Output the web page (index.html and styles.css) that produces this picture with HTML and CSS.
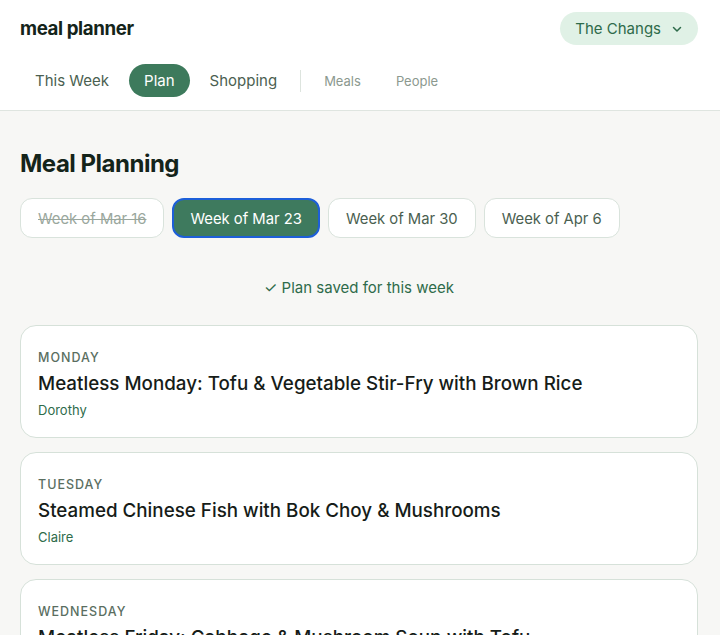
FILE: index.html
```html
<!DOCTYPE html>
<html lang="en">
<head>
<meta charset="utf-8">
<title>meal planner</title>
<link rel="stylesheet" href="styles.css">
</head>
<body>
<header class="header">
  <div class="top-row">
    <div class="brand">meal planner</div>
    <button class="household">The Changs
      <svg class="chev" width="12" height="12" viewBox="0 0 12 12" fill="none"><path d="M2.5 4.5 6 8l3.5-3.5" stroke="currentColor" stroke-width="1.5" stroke-linecap="round" stroke-linejoin="round"/></svg>
    </button>
  </div>
  <nav class="nav">
    <a class="nav-item">This Week</a>
    <a class="nav-item active">Plan</a>
    <a class="nav-item">Shopping</a>
    <span class="nav-divider"></span>
    <a class="nav-item minor">Meals</a>
    <a class="nav-item minor">People</a>
  </nav>
</header>
<main class="main">
  <h1 class="title">Meal Planning</h1>
  <div class="weeks">
    <button class="week past">Week of Mar 16</button>
    <button class="week current">Week of Mar 23</button>
    <button class="week">Week of Mar 30</button>
    <button class="week">Week of Apr 6</button>
  </div>
  <p class="saved">✓ Plan saved for this week</p>
  <div class="days">
    <section class="card">
      <div class="day">MONDAY</div>
      <div class="meal">Meatless Monday: Tofu &amp; Vegetable Stir-Fry with Brown Rice</div>
      <div class="cook">Dorothy</div>
    </section>
    <section class="card">
      <div class="day">TUESDAY</div>
      <div class="meal">Steamed Chinese Fish with Bok Choy &amp; Mushrooms</div>
      <div class="cook">Claire</div>
    </section>
    <section class="card">
      <div class="day">WEDNESDAY</div>
      <div class="meal">Meatless Friday: Cabbage &amp; Mushroom Soup with Tofu</div>
      <div class="cook">Dorothy</div>
    </section>
  </div>
</main>
</body>
</html>
```
FILE: styles.css
```css
* { box-sizing: border-box; }
html, body { margin: 0; padding: 0; }
body {
  font-family: Inter, "Noto Sans", sans-serif;
  background: #f7f7f5;
  color: #1a1f1b;
  overflow: hidden;
}
.header {
  background: #ffffff;
  border-bottom: 1px solid #dfe5e0;
  padding: 12px 22px 13px 20px;
}
.top-row {
  display: flex;
  justify-content: space-between;
  align-items: center;
  height: 33px;
}
.brand {
  font-size: 18.7px;
  font-weight: 700;
  letter-spacing: -0.4px;
  color: #14241a;
}
.household {
  display: flex;
  align-items: center;
  gap: 10px;
  height: 33px;
  padding: 0 15px 0 15px;
  border: none;
  border-radius: 17px;
  background: #e0f1e6;
  color: #2e6b4a;
  font-family: inherit;
  font-size: 15px;
}
.chev { color: #2e6b4a; }
.nav {
  display: flex;
  align-items: center;
  gap: 5px;
  margin-top: 19px;
  height: 33px;
}
.nav-item {
  display: flex;
  align-items: center;
  height: 33px;
  padding: 0 15px;
  border-radius: 17px;
  font-size: 15px;
  color: #4b5f51;
}
.nav-item.active {
  background: #3d7a5c;
  color: #ffffff;
}
.nav-item.minor {
  font-size: 13px;
  color: #8c998f;
  padding: 0 15px;
}
.nav-divider {
  width: 1px;
  height: 22px;
  background: #dde4de;
  margin: 0 3px;
}
.main {
  padding: 37px 22px 0 20px;
}
.title {
  margin: 0;
  font-size: 24px;
  line-height: 32px;
  font-weight: 700;
  letter-spacing: -0.5px;
  color: #14241a;
}
.weeks {
  display: flex;
  gap: 8px;
  margin-top: 18px;
}
.week {
  height: 40px;
  padding: 1px 17px 0;
  border: 1px solid #d9e3dc;
  border-radius: 12px;
  background: #ffffff;
  color: #4b5f51;
  font-family: inherit;
  font-size: 14.8px;
}
.week.past {
  color: #9aa79d;
  text-decoration: line-through;
}
.week.current {
  background: #3e7a5e;
  color: #ffffff;
  border: 2px solid #1d5fd9;
  padding: 1px 16px 0;
}
.saved {
  margin: 40px 0 0;
  text-align: center;
  font-size: 15px;
  line-height: 20px;
  color: #2e6b4a;
}
.days {
  display: flex;
  flex-direction: column;
  gap: 14px;
  margin-top: 27px;
}
.card {
  background: #ffffff;
  border: 1px solid #d6e1d9;
  border-radius: 16px;
  padding: 23px 17px 18px;
}
.day {
  font-size: 12.5px;
  line-height: 18px;
  letter-spacing: 1px;
  color: #5a6e5f;
  font-weight: 500;
}
.meal {
  margin-top: 5px;
  font-size: 18.8px;
  line-height: 24px;
  font-weight: 500;
  color: #161c18;
}
.cook {
  margin-top: 5px;
  font-size: 13px;
  line-height: 18px;
  color: #2e6b4a;
}
```
